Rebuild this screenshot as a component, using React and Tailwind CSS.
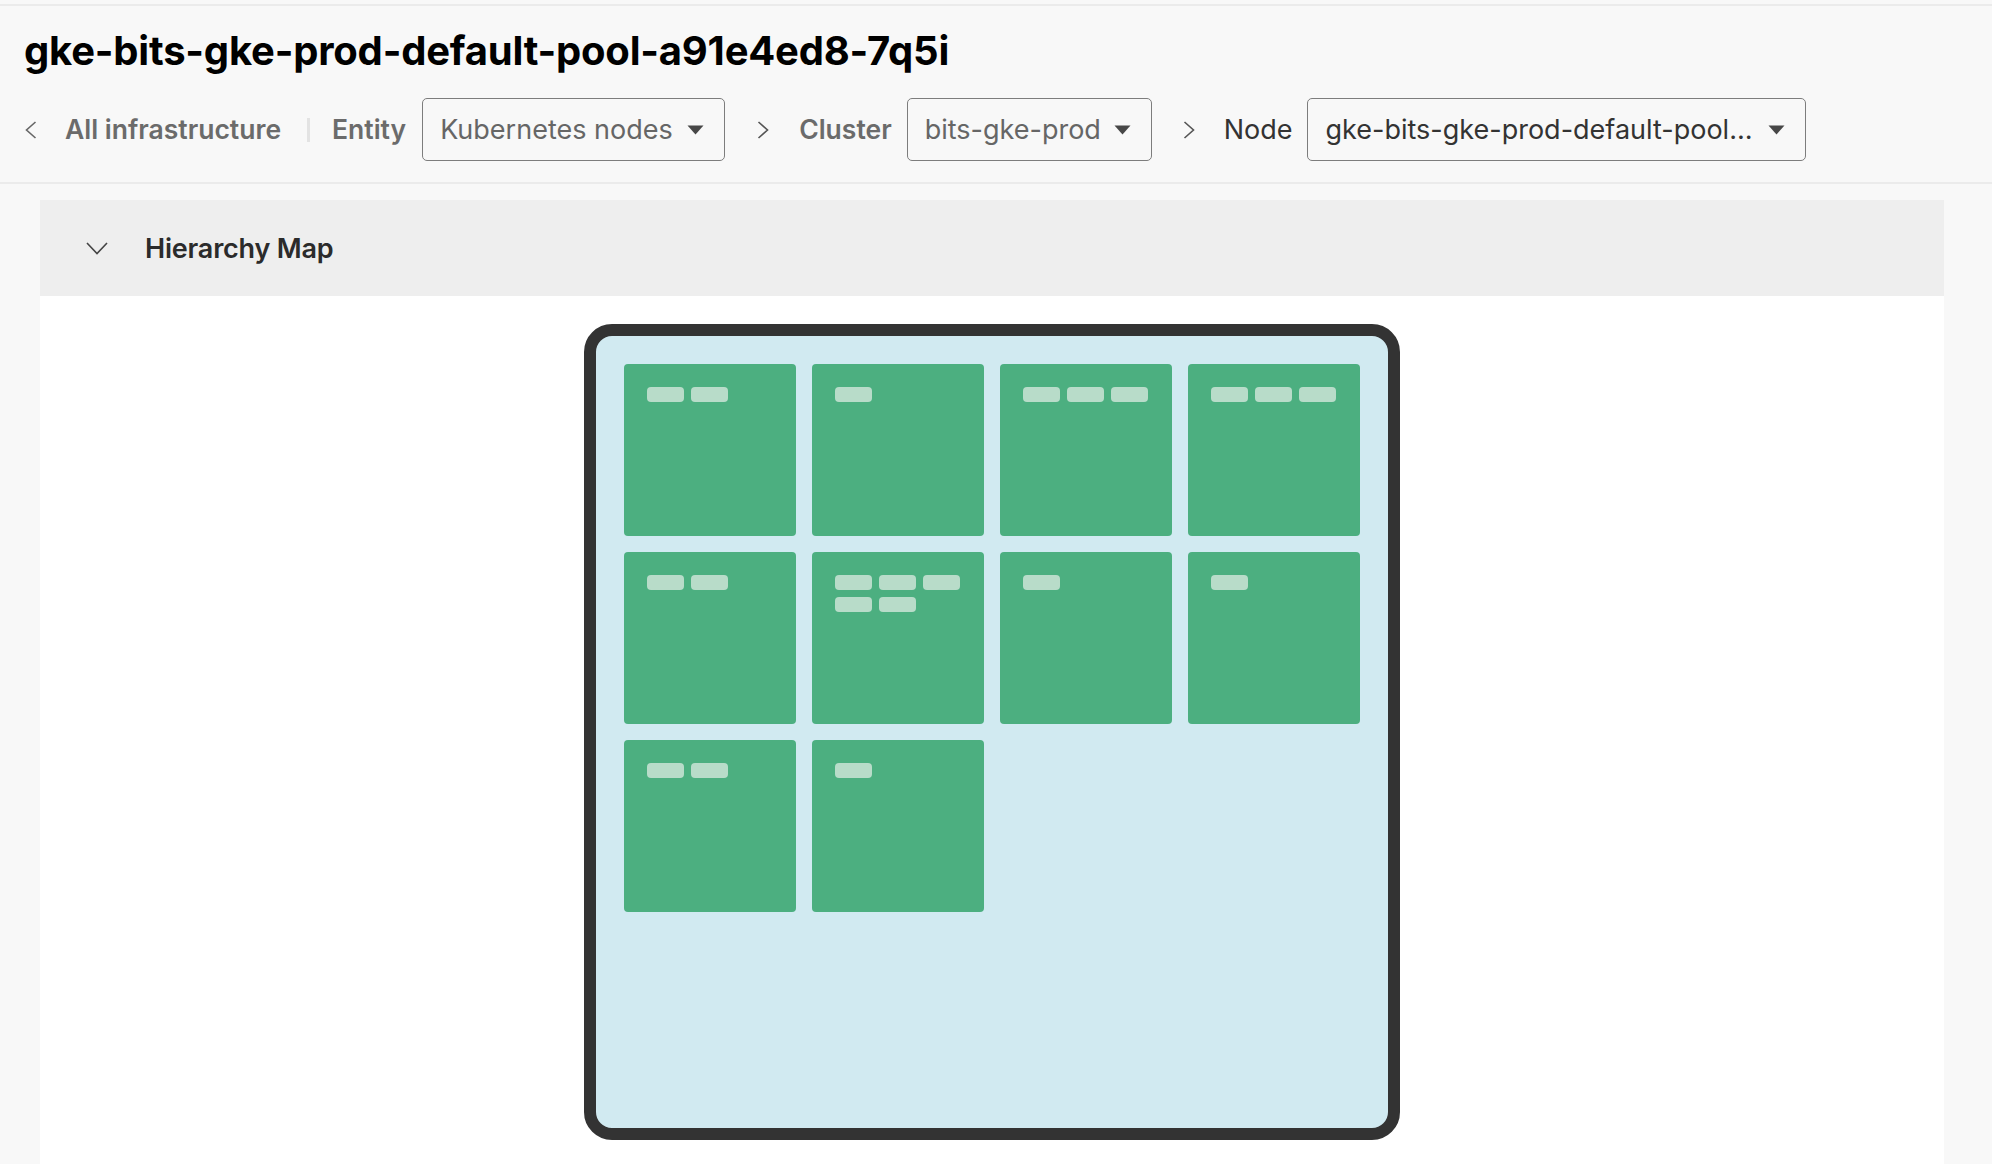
import React from "react";

const font = { fontFamily: "Inter, 'Noto Sans', sans-serif" };

function Caret() {
  return (
    <svg width="17" height="10" viewBox="0 0 17 10" className="shrink-0">
      <path d="M0.5 0.5 H16.5 L8.5 9.5 Z" fill="#474747" />
    </svg>
  );
}

function ChevronRight() {
  return (
    <svg width="12" height="18" viewBox="0 0 12 18" className="shrink-0">
      <polyline points="1.5,1 10.5,9 1.5,17" fill="none" stroke="#555" strokeWidth="1.6" />
    </svg>
  );
}

function ChevronLeft() {
  return (
    <svg width="12" height="18" viewBox="0 0 12 18" className="shrink-0">
      <polyline points="10.5,1 1.5,9 10.5,17" fill="none" stroke="#666" strokeWidth="1.6" />
    </svg>
  );
}

function Dropdown({ label, width, dark }) {
  return (
    <div
      className={`flex items-center h-[63px] rounded-[5px] border-[1.5px] border-[#7d7d7d] bg-[#f8f8f8] pl-[17px] pr-[20px] ${width}`}
    >
      <span className={`text-[27px] leading-none whitespace-nowrap ${dark ? "text-[#333333]" : "text-[#666666]"}`}>
        {label}
      </span>
      <span className="ml-auto">
        <Caret />
      </span>
    </div>
  );
}

const counts = [2, 1, 3, 3, 2, 5, 1, 1, 2, 1];

function Card({ n }) {
  return (
    <div className="w-[172px] h-[172px] rounded-[4px] bg-[#4caf80] p-[23px]">
      <div className="flex flex-wrap gap-[7px]">
        {Array.from({ length: n }).map((_, i) => (
          <div key={i} className="w-[37px] h-[15px] rounded-[4px] bg-[#b8dcc9]" />
        ))}
      </div>
    </div>
  );
}

export default function App() {
  return (
    <div className="min-h-[1164px] bg-[#f8f8f8]" style={font}>
      <div className="h-[4px]" />
      <div className="border-t-2 border-b-2 border-[#ebebeb] pb-[21px]">
        <h1 className="pt-[21px] pl-[24px] text-[40px] leading-[48px] font-bold text-black tracking-[-0.2px]">
          gke-bits-gke-prod-default-pool-a91e4ed8-7q5i
        </h1>
        <div className="mt-[23px] flex items-center pl-[25px]">
          <ChevronLeft />
          <span className="ml-[28px] text-[26.5px] font-semibold text-[#6b6b6b] leading-none">All infrastructure</span>
          <span className="ml-[26px] w-[3px] h-[24px] bg-[#e3e3e3]" />
          <span className="ml-[22px] text-[26.5px] font-semibold text-[#6b6b6b] leading-none">Entity</span>
          <div className="ml-[16px]">
            <Dropdown label="Kubernetes nodes" width="w-[303px]" />
          </div>
          <span className="ml-[32px]">
            <ChevronRight />
          </span>
          <span className="ml-[30px] text-[26.5px] font-semibold text-[#6b6b6b] leading-none">Cluster</span>
          <div className="ml-[15px]">
            <Dropdown label="bits-gke-prod" width="w-[245px]" />
          </div>
          <span className="ml-[31px]">
            <ChevronRight />
          </span>
          <span className="ml-[29px] text-[27px] text-[#333333] leading-none">Node</span>
          <div className="ml-[15px]">
            <Dropdown label="gke-bits-gke-prod-default-pool…" width="w-[499px]" dark />
          </div>
        </div>
      </div>
      <div className="pt-[16px] pl-[40px] pr-[48px]">
        <div className="bg-white min-h-[964px]">
          <div className="h-[96px] bg-[#eeeeee] flex items-center pl-[46px]">
            <svg width="22" height="13" viewBox="0 0 22 13" className="shrink-0">
              <polyline points="1,1 11,11.5 21,1" fill="none" stroke="#444" strokeWidth="1.6" />
            </svg>
            <span className="ml-[37px] text-[27px] font-semibold text-[#2b2b2b] leading-none tracking-[-0.2px]">
              Hierarchy Map
            </span>
          </div>
          <div className="flex justify-center pt-[28px]">
            <div className="w-[816px] h-[816px] rounded-[28px] border-[12px] border-[#333333] bg-[#d1eaf1] p-[28px]">
              <div className="grid grid-cols-[repeat(4,172px)] gap-[16px]">
                {counts.map((n, i) => (
                  <Card key={i} n={n} />
                ))}
              </div>
            </div>
          </div>
        </div>
      </div>
    </div>
  );
}
